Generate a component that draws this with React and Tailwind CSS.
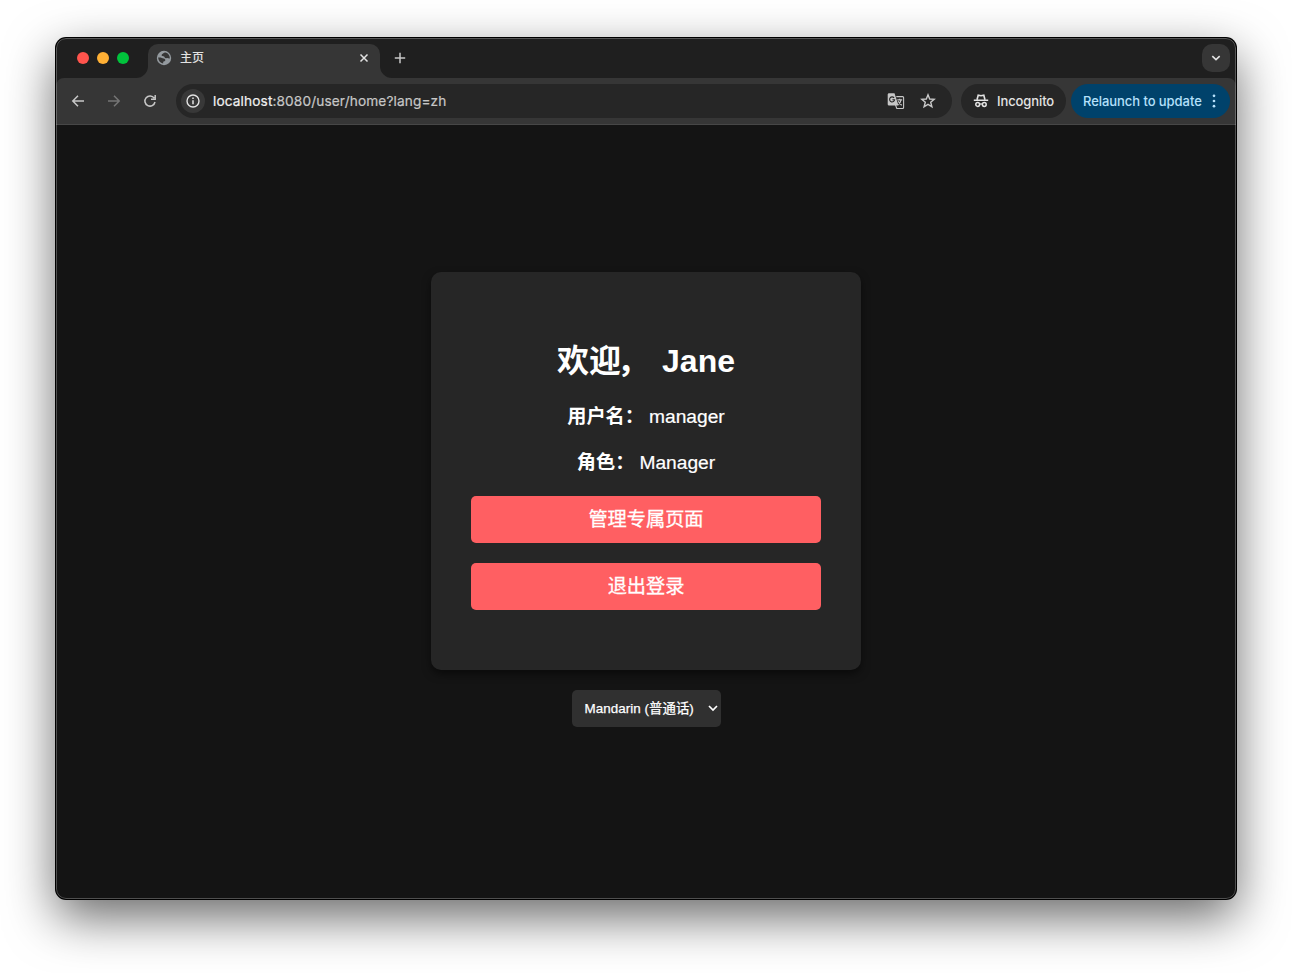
const Svg = ({ children, className, viewBox = '0 0 24 24' }) => (
  <svg viewBox={viewBox} className={`block shrink-0 ${className}`} fill="none" aria-hidden="true">{children}</svg>
);

function Tabs() {
  return (
    <div className="flex h-[40px] items-end pl-[21px] pr-[6px]">
      <div className="flex h-full items-center gap-2">
        <span className="size-3 rounded-full bg-[#ff544d]" />
        <span className="size-3 rounded-full bg-[#ffb035]" />
        <span className="size-3 rounded-full bg-[#01c33c]" />
      </div>
      <Svg viewBox="0 0 12 12" className="ml-[7px] size-3"><path d="M12 0v12H0A12 12 0 0 0 12 0Z" fill="#363636" /></Svg>
      <div className="flex h-[34px] w-[232px] items-center rounded-t-[10px] bg-[#363636] pb-[6px] pl-2 pr-[11px]">
        <Svg viewBox="0 0 16 16" className="size-4">
          <circle cx="8" cy="8" r="7.2" fill="#949a9f" />
          <path d="M9.500 2.400C7.400 2.300 7.300 3.700 6 4.300c-.7.5.2 1.200-.4 1.700 1 .2 2.700 0 3 1.300.3 1 1.300 1.200 2.300.8 1-.3 2 .8 2.900.2C14 5.500 12.300 3 9.500 2.400ZM2.100 7.600c.2 3 2 5.400 5 6 .3-.8-.3-1.600.6-2 1.200-.3 2-1.200 1.500-2.200C8.500 8.200 6.800 8.700 5.800 8 4.800 7.400 3.300 7.600 2.100 7.600Z" fill="#363636" />
        </Svg>
        <span className="ml-2 grow font-['Inter','Noto_Sans_CJK_SC',sans-serif] text-[12px] font-medium leading-4 text-[#e3e3e3]">主页</span>
        <Svg viewBox="0 0 10 10" className="size-[10px]"><path d="m1.500 1.500 7 7m0-7-7 7" stroke="#e3e3e3" strokeWidth="1.500" /></Svg>
      </div>
      <Svg viewBox="0 0 12 12" className="size-3"><path d="M0 0v12h12A12 12 0 0 1 0 0Z" fill="#363636" /></Svg>
      <div className="flex h-full grow items-center pl-[2px]">
        <Svg viewBox="0 0 12 12" className="size-3"><path d="M6 .8v10.400M.8 6h10.400" stroke="#c7c7c7" strokeWidth="1.500" /></Svg>
      </div>
      <div className="mb-[6px] flex size-7 items-center justify-center rounded-[10px] bg-[#363636]">
        <Svg viewBox="0 0 10 10" className="size-[10px]"><path d="m1.300 3.200 3.700 3.500 3.700-3.500" stroke="#e3e3e3" strokeWidth="1.600" /></Svg>
      </div>
    </div>
  );
}

function Toolbar() {
  return (
    <div className="flex h-[47px] items-center rounded-t-[8px] border-b border-[#474747] bg-[#363636] pl-[14px] pr-[6px] font-['Inter',sans-serif]">
      <Svg viewBox="0 0 16 16" className="size-4"><path d="M14 8H3M8 2.800 2.800 8 8 13.200" stroke="#c7c7c7" strokeWidth="1.500" /></Svg>
      <Svg viewBox="0 0 16 16" className="ml-5 size-4"><path d="M2 8h11M8 2.800 13.200 8 8 13.200" stroke="#757575" strokeWidth="1.500" /></Svg>
      <Svg viewBox="0 0 16 16" className="ml-5 size-4"><path d="M13 9A5.100 5.100 0 1 1 12.200 5.100M13.200 2v4.300H9" stroke="#c7c7c7" strokeWidth="1.500" /></Svg>
      <div className="ml-[18px] flex h-[34px] w-[776px] items-center rounded-full bg-[#262626] pl-[5px] pr-4">
        <span className="flex size-6 items-center justify-center rounded-full bg-[#383838]">
          <Svg viewBox="0 0 16 16" className="size-4"><circle cx="8" cy="8" r="6" stroke="#e3e3e3" strokeWidth="1.400" /><path d="M8 7.200v4M8 4.500v1.500" stroke="#e3e3e3" strokeWidth="1.500" /></Svg>
        </span>
        <span className="ml-2 grow whitespace-nowrap text-[13.700px] tracking-[0.110px] leading-5 text-[#c7c7c7] [-webkit-text-stroke:0.200px]"><span className="text-[#f0f0f0]">localhost</span>:8080/user/home?lang=zh</span>
        <Svg viewBox="0 0 18 18" className="size-[18px]">
          <path d="M9.300 4.600h6.300a1 1 0 0 1 1 1v9.900a1 1 0 0 1-1 1H9.800L8.500 13" stroke="#c7c7c7" strokeWidth="1.100" />
          <path d="M2 1.200h5.500l4 12.300H2A1.300 1.300 0 0 1 .7 12.200V2.500A1.300 1.300 0 0 1 2 1.200Z" fill="#c7c7c7" />
          <path d="M7.100 5.900A2.500 2.500 0 1 0 7.600 7.700H5.400" stroke="#262626" strokeWidth="1.100" />
          <path d="M10.300 7.900h4.900M12.700 6.700v1.200m1.300 0c-.3 2-1.400 3.700-2.700 4.700M11.300 9.300c.7 1.600 2 2.900 3.500 4" stroke="#c7c7c7" strokeWidth="1.100" />
        </Svg>
        <Svg viewBox="0 0 16 16" className="ml-[15px] size-4"><path d="m8 1.800 1.700 4.200 4.500.3-3.500 3 1.200 4.500L8 11.400l-3.900 2.400 1.200-4.500-3.500-3L6.300 6 8 1.800Z" stroke="#c7c7c7" strokeWidth="1.400" /></Svg>
      </div>
      <div className="ml-[9px] flex h-[34px] w-[105px] items-center rounded-full bg-[#262626] pl-3 text-[13px] font-medium text-[#e3e3e3]">
        <Svg viewBox="0 0 16 16" className="size-4">
          <path d="M.8 7.200h14.400" stroke="#e3e3e3" strokeWidth="1.500" />
          <path d="M4 6.800 5.200 2.200 8 2.800l2.800-.6L12 6.800" stroke="#e3e3e3" strokeWidth="1.600" />
          <circle cx="4.700" cy="11.500" r="1.900" stroke="#e3e3e3" strokeWidth="1.500" /><circle cx="11.300" cy="11.500" r="1.900" stroke="#e3e3e3" strokeWidth="1.500" />
          <path d="M6.500 11.200q1.500-.8 3 0" stroke="#e3e3e3" strokeWidth="1.300" />
        </Svg>
        <span className="ml-2 mt-[2px] tracking-[-0.100px]">Incognito</span>
      </div>
      <div className="ml-auto flex h-[34px] w-[159px] items-center rounded-full bg-[#00426b] pl-3 text-[13px] font-medium text-[#b5e0fb]">
        <span className="mt-[2px] grow whitespace-nowrap tracking-[-0.060px]">Relaunch to update</span>
        <Svg viewBox="0 0 4 16" className="mr-[14px] h-4 w-1"><g fill="#b5e0fb"><circle cx="2" cy="2.800" r="1.350" /><circle cx="2" cy="8" r="1.350" /><circle cx="2" cy="13.200" r="1.350" /></g></Svg>
      </div>
    </div>
  );
}

const Field = ({ label, value }) => (
  <p className="mb-[19px] flex h-[27px] items-center justify-center gap-[5px] whitespace-nowrap text-[19.200px]">
    <strong>{label}</strong><span className="[-webkit-text-stroke:0.200px]">{value}</span>
  </p>
);

const Action = ({ children, className }) => (
  <button className={`h-[47px] shrink-0 rounded-[5px] bg-[#ff5f62] pt-[2px] text-[19.200px] [-webkit-text-stroke:0.300px] ${className}`}>{children}</button>
);

function Home() {
  return (
    <main className="flex grow flex-col items-center bg-[#141414] pt-[147px] font-['Liberation_Sans','Noto_Sans_CJK_SC',sans-serif] text-white">
      <section className="flex h-[398px] w-[430px] flex-col rounded-[10px] bg-[#262626] px-10 pt-[69px] shadow-[0_4px_8px_rgba(0,0,0,0.5)]">
        <h1 className="mb-[23px] flex h-[40px] items-center justify-center gap-[13px] whitespace-nowrap text-[32px] font-bold"><span>欢<span className="tracking-[-4px]">迎</span>，</span><span>Jane</span></h1>
        <Field label="用户名：" value="manager" />
        <Field label="角色：" value="Manager" />
        <Action className="mb-5">管理专属页面</Action>
        <Action className="">退出登录</Action>
      </section>
      <button className="mt-5 flex h-[37px] w-[149px] items-center justify-between rounded-[5px] bg-[#303030] pl-[13px] pr-[3px] text-[13.400px]">
        <span className="mt-[2px] whitespace-nowrap tracking-[0.050px] [-webkit-text-stroke:0.250px]">Mandarin (普通话)</span>
        <Svg viewBox="0 0 10 10" className="mb-[2px] size-[10px]"><path d="m1 3 4 4 4-4" stroke="white" strokeWidth="1.700" /></Svg>
      </button>
    </main>
  );
}

export default function App() {
  return (
    <div className="flex h-[973px] w-[1292px] overflow-hidden bg-white px-[56px] pb-[74px] pt-[38px]">
      <div className="relative flex w-[1180px] flex-col overflow-hidden rounded-[10px] bg-[#1f1f1f] shadow-[0_0_0_1px_#000,0_18px_50px_rgba(0,0,0,0.6)]">
        <Tabs />
        <Toolbar />
        <Home />
        <div className="pointer-events-none absolute inset-0 rounded-[10px] border border-white/25" />
      </div>
    </div>
  );
}
